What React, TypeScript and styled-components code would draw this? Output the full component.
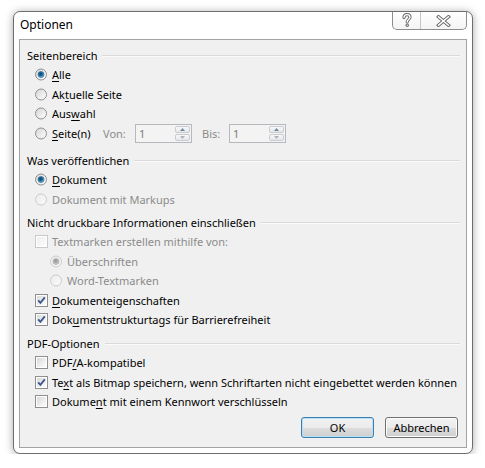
import React from 'react';
import styled, { createGlobalStyle } from 'styled-components';

const GlobalStyle = createGlobalStyle`
  html, body { margin: 0; padding: 0; background: #ffffff; }
  body { font-family: "Noto Sans", "Open Sans", sans-serif; font-size: 11px; color: #000; }
  * { box-sizing: border-box; }
`;

const Window = styled.div`
  margin: 11px 0 0 13px;
  width: 460px;
  height: 443px;
  border: 1px solid #6e6e6e;
  border-radius: 7px;
  background: #ffffff;
  box-shadow: 0 1px 8px rgba(0, 0, 0, 0.35);
  padding: 0 5px 5px;
  display: flex;
  flex-direction: column;
`;

const TitleBar = styled.div`
  height: 27px;
  flex: none;
  display: flex;
  justify-content: space-between;
  align-items: flex-start;
`;

const Title = styled.div`
  height: 27px;
  padding: 0 0 3px 1px;
  display: flex;
  align-items: center;
  font-size: 12px;
  color: #000;
`;

const CaptionButtons = styled.div`
  display: flex;
  height: 18px;
  border: 1px solid #8d8d8d;
  border-top: none;
  border-radius: 0 0 5px 5px;
  background: linear-gradient(#ffffff, #f4f4f4);
  overflow: hidden;
`;

const CaptionButton = styled.div<{ $w: number; $sep?: boolean }>`
  width: ${(p) => p.$w}px;
  height: 100%;
  display: flex;
  align-items: center;
  justify-content: center;
  border-left: ${(p) => (p.$sep ? '1px solid #c6c6c6' : 'none')};
`;

const Client = styled.div`
  flex: 1;
  border: 1px solid #a3a3a3;
  background: #f0f0f0;
  padding: 5px 6px 0 7px;
  display: flex;
  flex-direction: column;
`;

const Group = styled.div<{ $top: number }>`
  margin-top: ${(p) => p.$top}px;
  display: flex;
  flex-direction: column;
`;

const GroupHeader = styled.div`
  height: 20px;
  display: flex;
  align-items: center;
  gap: 5px;
  white-space: nowrap;
  &::after {
    content: '';
    flex: 1;
    height: 1px;
    background: #dadada;
    box-shadow: 0 1px 0 #fbfbfb;
  }
`;

const Row = styled.div<{ $indent: number }>`
  height: 19.5px;
  display: flex;
  align-items: center;
  padding-left: ${(p) => p.$indent}px;
  white-space: nowrap;
`;

const ControlSlot = styled.span`
  width: 13px;
  height: 13px;
  margin-right: 4px;
  display: flex;
  align-items: center;
  justify-content: center;
  flex: none;
`;

const Label = styled.span<{ $disabled?: boolean; $width?: number }>`
  color: ${(p) => (p.$disabled ? '#8b8b8b' : '#000')};
  width: ${(p) => (p.$width ? `${p.$width}px` : 'auto')};
  flex: none;
  u { text-decoration: underline; text-underline-offset: 2px; }
`;

const FieldLabel = styled.span<{ $width: number }>`
  width: ${(p) => p.$width}px;
  color: #8b8b8b;
  flex: none;
`;

const SpinBox = styled.div<{ $gap?: number }>`
  width: 57px;
  height: 19px;
  border: 1px solid #b5b9bd;
  background: #f3f3f3;
  display: flex;
  align-items: center;
  justify-content: space-between;
  padding: 0 1px 0 3px;
  margin-right: ${(p) => p.$gap ?? 0}px;
  color: #7a7a7a;
  flex: none;
`;

const Spinner = styled.div`
  width: 15px;
  height: 15px;
  display: flex;
  flex-direction: column;
  gap: 1px;
`;

const SpinHalf = styled.div`
  flex: 1;
  border: 1px solid #c9cdd1;
  border-radius: 2px;
  background: linear-gradient(#f8f8f8, #e6e6e6);
  display: flex;
  align-items: center;
  justify-content: center;
`;

const ButtonRow = styled.div`
  margin-top: 5.5px;
  display: flex;
  justify-content: flex-end;
  gap: 11px;
  padding-right: 2px;
`;

const DialogButton = styled.button<{ $default?: boolean }>`
  width: 73px;
  height: 21px;
  font-family: "Noto Sans", "Open Sans", sans-serif;
  font-size: 11px;
  color: #000;
  padding: 0;
  border-radius: 3px;
  border: 1px solid ${(p) => (p.$default ? '#3c7fb1' : '#707070')};
  background: linear-gradient(#f2f2f2 0%, #ebebeb 50%, #dddddd 51%, #cfcfcf 100%);
  box-shadow: inset 0 0 0 1px ${(p) => (p.$default ? '#b6def4' : '#fcfcfc')};
`;

const Radio = ({ checked, disabled }: { checked?: boolean; disabled?: boolean }) => (
  <svg width="13" height="13" viewBox="0 0 13 13">
    <defs>
      <linearGradient id={`rf${disabled ? 'd' : ''}`} x1="0" y1="0" x2="1" y2="1">
        <stop offset="0" stopColor={disabled ? '#ececec' : '#d4d4d4'} />
        <stop offset="1" stopColor={disabled ? '#fafafa' : '#ffffff'} />
      </linearGradient>
      <radialGradient id="rdot" cx="0.45" cy="0.4" r="0.6">
        <stop offset="0" stopColor="#0d3f66" />
        <stop offset="0.55" stopColor="#1f6d9c" />
        <stop offset="1" stopColor="#7cc8ec" />
      </radialGradient>
      <radialGradient id="rdotd" cx="0.45" cy="0.4" r="0.6">
        <stop offset="0" stopColor="#8f8f8f" />
        <stop offset="1" stopColor="#d0d0d0" />
      </radialGradient>
    </defs>
    <circle cx="6" cy="6.5" r="5.5" fill={`url(#rf${disabled ? 'd' : ''})`} stroke={disabled ? '#cbcbcb' : '#8f9091'} />
    {checked && (
      <circle cx="6" cy="6.5" r="3" fill={disabled ? 'url(#rdotd)' : 'url(#rdot)'} stroke={disabled ? '#a8a8a8' : '#2a6792'} strokeWidth="0.7" />
    )}
  </svg>
);

const Check = ({ checked, disabled }: { checked?: boolean; disabled?: boolean }) => (
  <svg width="13" height="13" viewBox="0 0 13 13">
    <defs>
      <linearGradient id={`cf${disabled ? 'd' : ''}`} x1="0" y1="0" x2="1" y2="1">
        <stop offset="0" stopColor={disabled ? '#efefef' : '#d9d9d9'} />
        <stop offset="1" stopColor={disabled ? '#fbfbfb' : '#fdfdfd'} />
      </linearGradient>
    </defs>
    <rect x="0.5" y="0.5" width="12" height="12" fill="#ffffff" stroke={disabled ? '#c9c9c9' : '#8f8f8f'} />
    <rect x="2" y="2" width="9" height="9" fill={`url(#cf${disabled ? 'd' : ''})`} />
    {checked && (
      <path d="M3.2 6.4 L5.4 8.8 L9.8 3.4" fill="none" stroke="#3f5a8e" strokeWidth="1.9" strokeLinejoin="miter" />
    )}
  </svg>
);

const Arrow = ({ up }: { up?: boolean }) => (
  <svg width="5" height="3" viewBox="0 0 5 3">
    <path d={up ? 'M0 3 L2.5 0 L5 3 Z' : 'M0 0 L2.5 3 L5 0 Z'} fill={up ? '#6a8aa8' : '#a8b4bf'} />
  </svg>
);

const HelpIcon = () => (
  <svg width="12" height="15" viewBox="0 0 12 15">
    <path d="M3 4.6 C3 2.6 4.4 1.6 6 1.6 C7.8 1.6 9 2.7 9 4.3 C9 6.2 6.2 6.6 6.2 9" fill="none" stroke="#6b6b6b" strokeWidth="3.2" strokeLinecap="round" />
    <path d="M3 4.6 C3 2.6 4.4 1.6 6 1.6 C7.8 1.6 9 2.7 9 4.3 C9 6.2 6.2 6.6 6.2 9" fill="none" stroke="#ffffff" strokeWidth="1.3" strokeLinecap="round" />
    <circle cx="6.2" cy="12.2" r="1.7" fill="#6b6b6b" />
    <circle cx="6.2" cy="12.2" r="0.7" fill="#ffffff" />
  </svg>
);

const CloseIcon = () => (
  <svg width="15" height="12" viewBox="0 0 15 12">
    <path d="M2.5 1.8 L12.5 10.2 M12.5 1.8 L2.5 10.2" fill="none" stroke="#6b6b6b" strokeWidth="3.4" strokeLinecap="square" />
    <path d="M2.5 1.8 L12.5 10.2 M12.5 1.8 L2.5 10.2" fill="none" stroke="#ffffff" strokeWidth="1.4" strokeLinecap="square" />
  </svg>
);

type Item = {
  kind: 'radio' | 'check';
  label: React.ReactNode;
  checked?: boolean;
  disabled?: boolean;
  indent?: number;
};

const OptionRow = ({ item }: { item: Item }) => (
  <Row $indent={item.indent ?? 8}>
    <ControlSlot>
      {item.kind === 'radio' ? (
        <Radio checked={item.checked} disabled={item.disabled} />
      ) : (
        <Check checked={item.checked} disabled={item.disabled} />
      )}
    </ControlSlot>
    <Label $disabled={item.disabled}>{item.label}</Label>
  </Row>
);

const SpinField = ({ gap }: { gap?: number }) => (
  <SpinBox $gap={gap}>
    <span>1</span>
    <Spinner>
      <SpinHalf>
        <Arrow up />
      </SpinHalf>
      <SpinHalf>
        <Arrow />
      </SpinHalf>
    </Spinner>
  </SpinBox>
);

export default function App() {
  return (
    <>
      <GlobalStyle />
      <Window>
        <TitleBar>
          <Title>Optionen</Title>
          <CaptionButtons>
            <CaptionButton $w={27}>
              <HelpIcon />
            </CaptionButton>
            <CaptionButton $w={46} $sep>
              <CloseIcon />
            </CaptionButton>
          </CaptionButtons>
        </TitleBar>
        <Client>
          <Group $top={0}>
            <GroupHeader>Seitenbereich</GroupHeader>
            <OptionRow item={{ kind: 'radio', checked: true, label: <><u>A</u>lle</> }} />
            <OptionRow item={{ kind: 'radio', label: <>Ak<u>t</u>uelle Seite</> }} />
            <OptionRow item={{ kind: 'radio', label: <>Aus<u>w</u>ahl</> }} />
            <Row $indent={8}>
              <ControlSlot>
                <Radio />
              </ControlSlot>
              <Label $width={51}>
                <u>S</u>eite(n)
              </Label>
              <FieldLabel $width={32}>Von:</FieldLabel>
              <SpinField gap={10} />
              <FieldLabel $width={27}>Bis:</FieldLabel>
              <SpinField />
            </Row>
          </Group>
          <Group $top={7}>
            <GroupHeader>Was veröffentlichen</GroupHeader>
            <OptionRow item={{ kind: 'radio', checked: true, label: <><u>D</u>okument</> }} />
            <OptionRow item={{ kind: 'radio', disabled: true, label: 'Dokument mit Markups' }} />
          </Group>
          <Group $top={3}>
            <GroupHeader>Nicht druckbare Informationen einschließen</GroupHeader>
            <OptionRow item={{ kind: 'check', disabled: true, label: 'Textmarken erstellen mithilfe von:' }} />
            <OptionRow item={{ kind: 'radio', disabled: true, checked: true, indent: 23, label: 'Überschriften' }} />
            <OptionRow item={{ kind: 'radio', disabled: true, indent: 23, label: 'Word-Textmarken' }} />
            <OptionRow item={{ kind: 'check', checked: true, label: <><u>D</u>okumenteigenschaften</> }} />
            <OptionRow item={{ kind: 'check', checked: true, label: <>Dok<u>u</u>mentstrukturtags für Barrierefreiheit</> }} />
          </Group>
          <Group $top={3.5}>
            <GroupHeader>PDF-Optionen</GroupHeader>
            <OptionRow item={{ kind: 'check', label: <>PDF<u>/</u>A-kompatibel</> }} />
            <OptionRow
              item={{
                kind: 'check',
                checked: true,
                label: <>Te<u>x</u>t als Bitmap speichern, wenn Schriftarten nicht eingebettet werden können</>,
              }}
            />
            <OptionRow item={{ kind: 'check', label: <>Dokume<u>n</u>t mit einem Kennwort verschlüsseln</> }} />
          </Group>
          <ButtonRow>
            <DialogButton $default>OK</DialogButton>
            <DialogButton>Abbrechen</DialogButton>
          </ButtonRow>
        </Client>
      </Window>
    </>
  );
}
